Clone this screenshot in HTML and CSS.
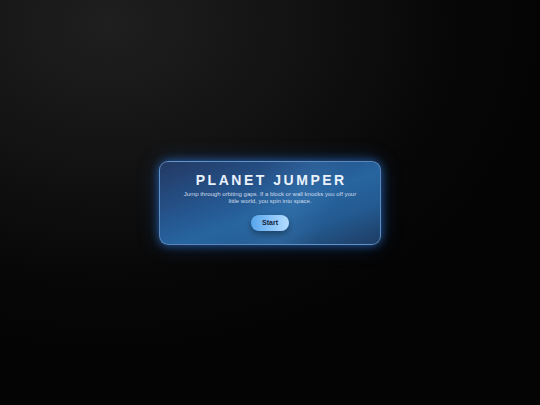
FILE: index.html
```html
<!DOCTYPE html>
<html>
<head>
<meta charset="utf-8">
<link rel="stylesheet" href="styles.css">
</head>
<body>
<main class="stage">
  <section class="card">
    <h1 class="title">PLANET JUMPER</h1>
    <p class="subtitle">Jump through orbiting gaps. If a block or wall knocks you off your little world, you spin into space.</p>
    <button class="start">Start</button>
  </section>
</main>
</body>
</html>
```
FILE: styles.css
```css
html, body {
  margin: 0;
  padding: 0;
  height: 100%;
}
body {
  background: radial-gradient(ellipse 80% 80% at 20% 6%, #1f1f1f 0%, #121212 45%, #070707 80%, #040404 100%);
  font-family: "Liberation Sans", Arial, sans-serif;
}
.stage {
  height: 405px;
  display: flex;
  align-items: center;
  justify-content: center;
}
.card {
  box-sizing: border-box;
  width: 222px;
  padding: 10px 18px 13px;
  border-radius: 9px;
  border: 1px solid rgba(140, 190, 240, 0.55);
  background:
    linear-gradient(115deg, rgba(255,255,255,0) 40%, rgba(120,190,255,0.10) 60%, rgba(255,255,255,0) 75%),
    linear-gradient(160deg, #233963 0%, #25548c 35%, #2765a0 55%, #235a90 75%, #1e3c63 100%);
  box-shadow: 0 0 10px rgba(50, 140, 255, 0.6), 0 0 22px rgba(40, 110, 220, 0.28);
  display: flex;
  flex-direction: column;
  align-items: center;
  text-align: center;
}
.title {
  margin: 0;
  font-size: 14px;
  line-height: 16px;
  font-weight: bold;
  letter-spacing: 0.18em;
  margin-right: -0.18em;
  color: #e9f1fb;
}
.subtitle {
  margin: 3px 0 0;
  font-size: 6px;
  line-height: 7px;
  color: #cfdcec;
}
.start {
  margin-top: 10px;
  width: 38px;
  height: 16px;
  border: none;
  border-radius: 8px;
  padding: 0;
  font-family: "Liberation Sans", Arial, sans-serif;
  font-size: 7px;
  font-weight: bold;
  color: #13223a;
  background: linear-gradient(90deg, #57a5ec 0%, #86c2f8 50%, #b4dcff 100%);
  box-shadow: 0 3px 6px rgba(0, 0, 0, 0.35);
}
```
